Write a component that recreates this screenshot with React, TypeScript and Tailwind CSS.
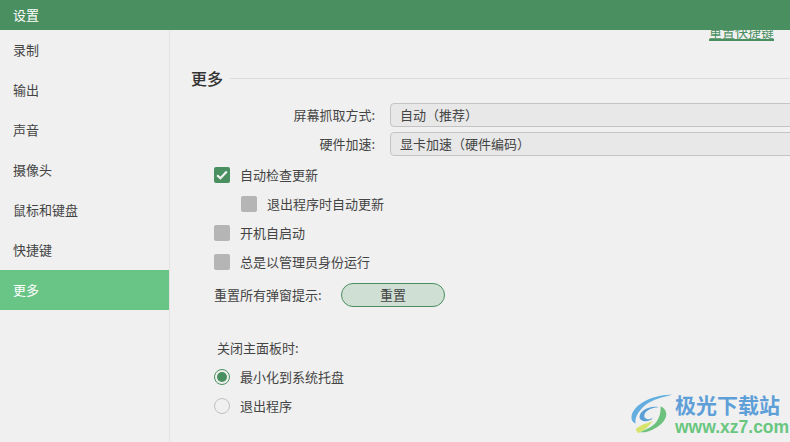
const FONT = "font-['Noto_Sans_CJK_SC',sans-serif]";

const navItems = ["录制", "输出", "声音", "摄像头", "鼠标和键盘", "快捷键", "更多"];

function CheckBox({ checked = false }: { checked?: boolean }) {
  return (
    <span className={`flex h-4 w-4 shrink-0 items-center justify-center rounded-[2px] ${checked ? "bg-[#4a8f5f]" : "bg-[#b5b5b5]"}`}>
      {checked && (
        <svg width="12" height="10" viewBox="0 0 12 10" fill="none">
          <path d="M1.2 5.2 L4.4 8.2 L10.8 1.6" stroke="#f4f4f4" strokeWidth="2.2" />
        </svg>
      )}
    </span>
  );
}

function CheckRow({ label, checked, indent }: { label: string; checked?: boolean; indent?: boolean }) {
  return (
    <div className={`flex h-[29px] items-center gap-[10px] ${indent ? "pl-[27px]" : ""}`}>
      <CheckBox checked={checked} />
      <span>{label}</span>
    </div>
  );
}

function Radio({ label, checked }: { label: string; checked?: boolean }) {
  return (
    <div className="flex h-[29px] items-center gap-[10px]">
      <span className={`flex h-4 w-4 shrink-0 items-center justify-center rounded-full border ${checked ? "border-[#4a8f5f]" : "border-[#c0c0c0]"}`}>
        {checked && <span className="h-[10px] w-[10px] rounded-full bg-[#4a8f5f]" />}
      </span>
      <span>{label}</span>
    </div>
  );
}

function SelectRow({ label, value }: { label: string; value: string }) {
  return (
    <div className="flex items-center">
      <span className="w-[184px] shrink-0 text-right">{label}</span>
      <div className="ml-[15px] flex h-6 w-[420px] shrink-0 items-center rounded-[4px] border border-[#c4c4c4] bg-[#e8e8e8] pl-[9px]">
        {value}
      </div>
    </div>
  );
}

function Watermark() {
  return (
    <div className="pointer-events-none absolute bottom-[5px] left-[630px] flex items-center gap-px">
      <svg width="44" height="44" viewBox="0 0 46 44" fill="none">
        <path d="M44 2 C28 2 10 8 3 20 C0 26 2 31 6 32 C4 26 10 16 20 10 C28 6 36 4 44 2 Z" fill="#62aee0" />
        <path d="M10 24 C12 17 22 13 30 15 C24 15 16 18 15 23 C14 27 20 29 24 26 C21 31 9 31 10 24 Z" fill="#5b9fd6" />
        <path d="M32 14 C40 18 40 26 32 33 C26 38 18 42 10 41 C18 38 26 34 29 28 C32 23 32 18 32 14 Z" fill="#6cc27c" />
        <path d="M6 38 C10 33 18 32 24 29 C20 35 14 40 8 42 Z" fill="#d6e46c" />
      </svg>
      <div className="flex flex-col">
        <span className="text-[21px] leading-[26px] font-bold text-[#5f9fd8]">极光下载站</span>
        <span className="font-['Liberation_Sans',sans-serif] text-[17.5px] leading-5 font-bold text-[#68c67f]">www.xz7.com</span>
      </div>
    </div>
  );
}

export default function App() {
  return (
    <div className={`relative flex h-[442px] w-[790px] flex-col overflow-hidden bg-[#f0f0f0] text-[13px] text-[#444] ${FONT}`}>
      <div className="flex h-[30px] shrink-0 items-center bg-[#4a8f5f] pl-[13px] text-white">设置</div>
      <div className="flex min-h-0 flex-1">
        <div className="w-[170px] shrink-0 border-r border-[#e2e2e2]">
          {navItems.map((item) => (
            <div
              key={item}
              className={`flex h-10 items-center pl-[13px] ${item === "更多" ? "bg-[#69c585] text-white" : ""}`}
            >
              {item}
            </div>
          ))}
        </div>
        <div className="min-w-0 flex-1 overflow-hidden pl-[21px]">
          <div className="-mt-[6px] flex justify-end pr-[16px]">
            <span className="border-b-2 border-[#4a8f5f] text-[13px] leading-[15px] text-[#4a8f5f]">重置快捷键</span>
          </div>
          <div className="mt-[27px] flex items-center gap-[7px]">
            <span className="text-[16px] leading-5 font-medium text-[#333]">更多</span>
            <div className="h-px flex-1 bg-[#dcdcdc]" />
          </div>
          <div className="mt-[15px] flex flex-col gap-[5px]">
            <SelectRow label="屏幕抓取方式:" value={"自动\uFF08推荐\uFF09"} />
            <SelectRow label="硬件加速:" value={"显卡加速\uFF08硬件编码\uFF09"} />
          </div>
          <div className="mt-[4px] pl-[23px]">
            <CheckRow label="自动检查更新" checked />
            <CheckRow label="退出程序时自动更新" indent />
            <CheckRow label="开机自启动" />
            <CheckRow label="总是以管理员身份运行" />
            <div className="mt-[7px] flex items-center">
              <span className="w-[127px]">重置所有弹窗提示:</span>
              <button className="h-6 w-[104px] rounded-full border border-[#4a8f5f] bg-[#d0dfd4] text-[#444]">重置</button>
            </div>
            <div className="mt-[32px] pl-[3px] leading-[18px]">关闭主面板时:</div>
            <div className="mt-[5px]">
              <Radio label="最小化到系统托盘" checked />
              <Radio label="退出程序" />
            </div>
          </div>
        </div>
      </div>
      <Watermark />
    </div>
  );
}
